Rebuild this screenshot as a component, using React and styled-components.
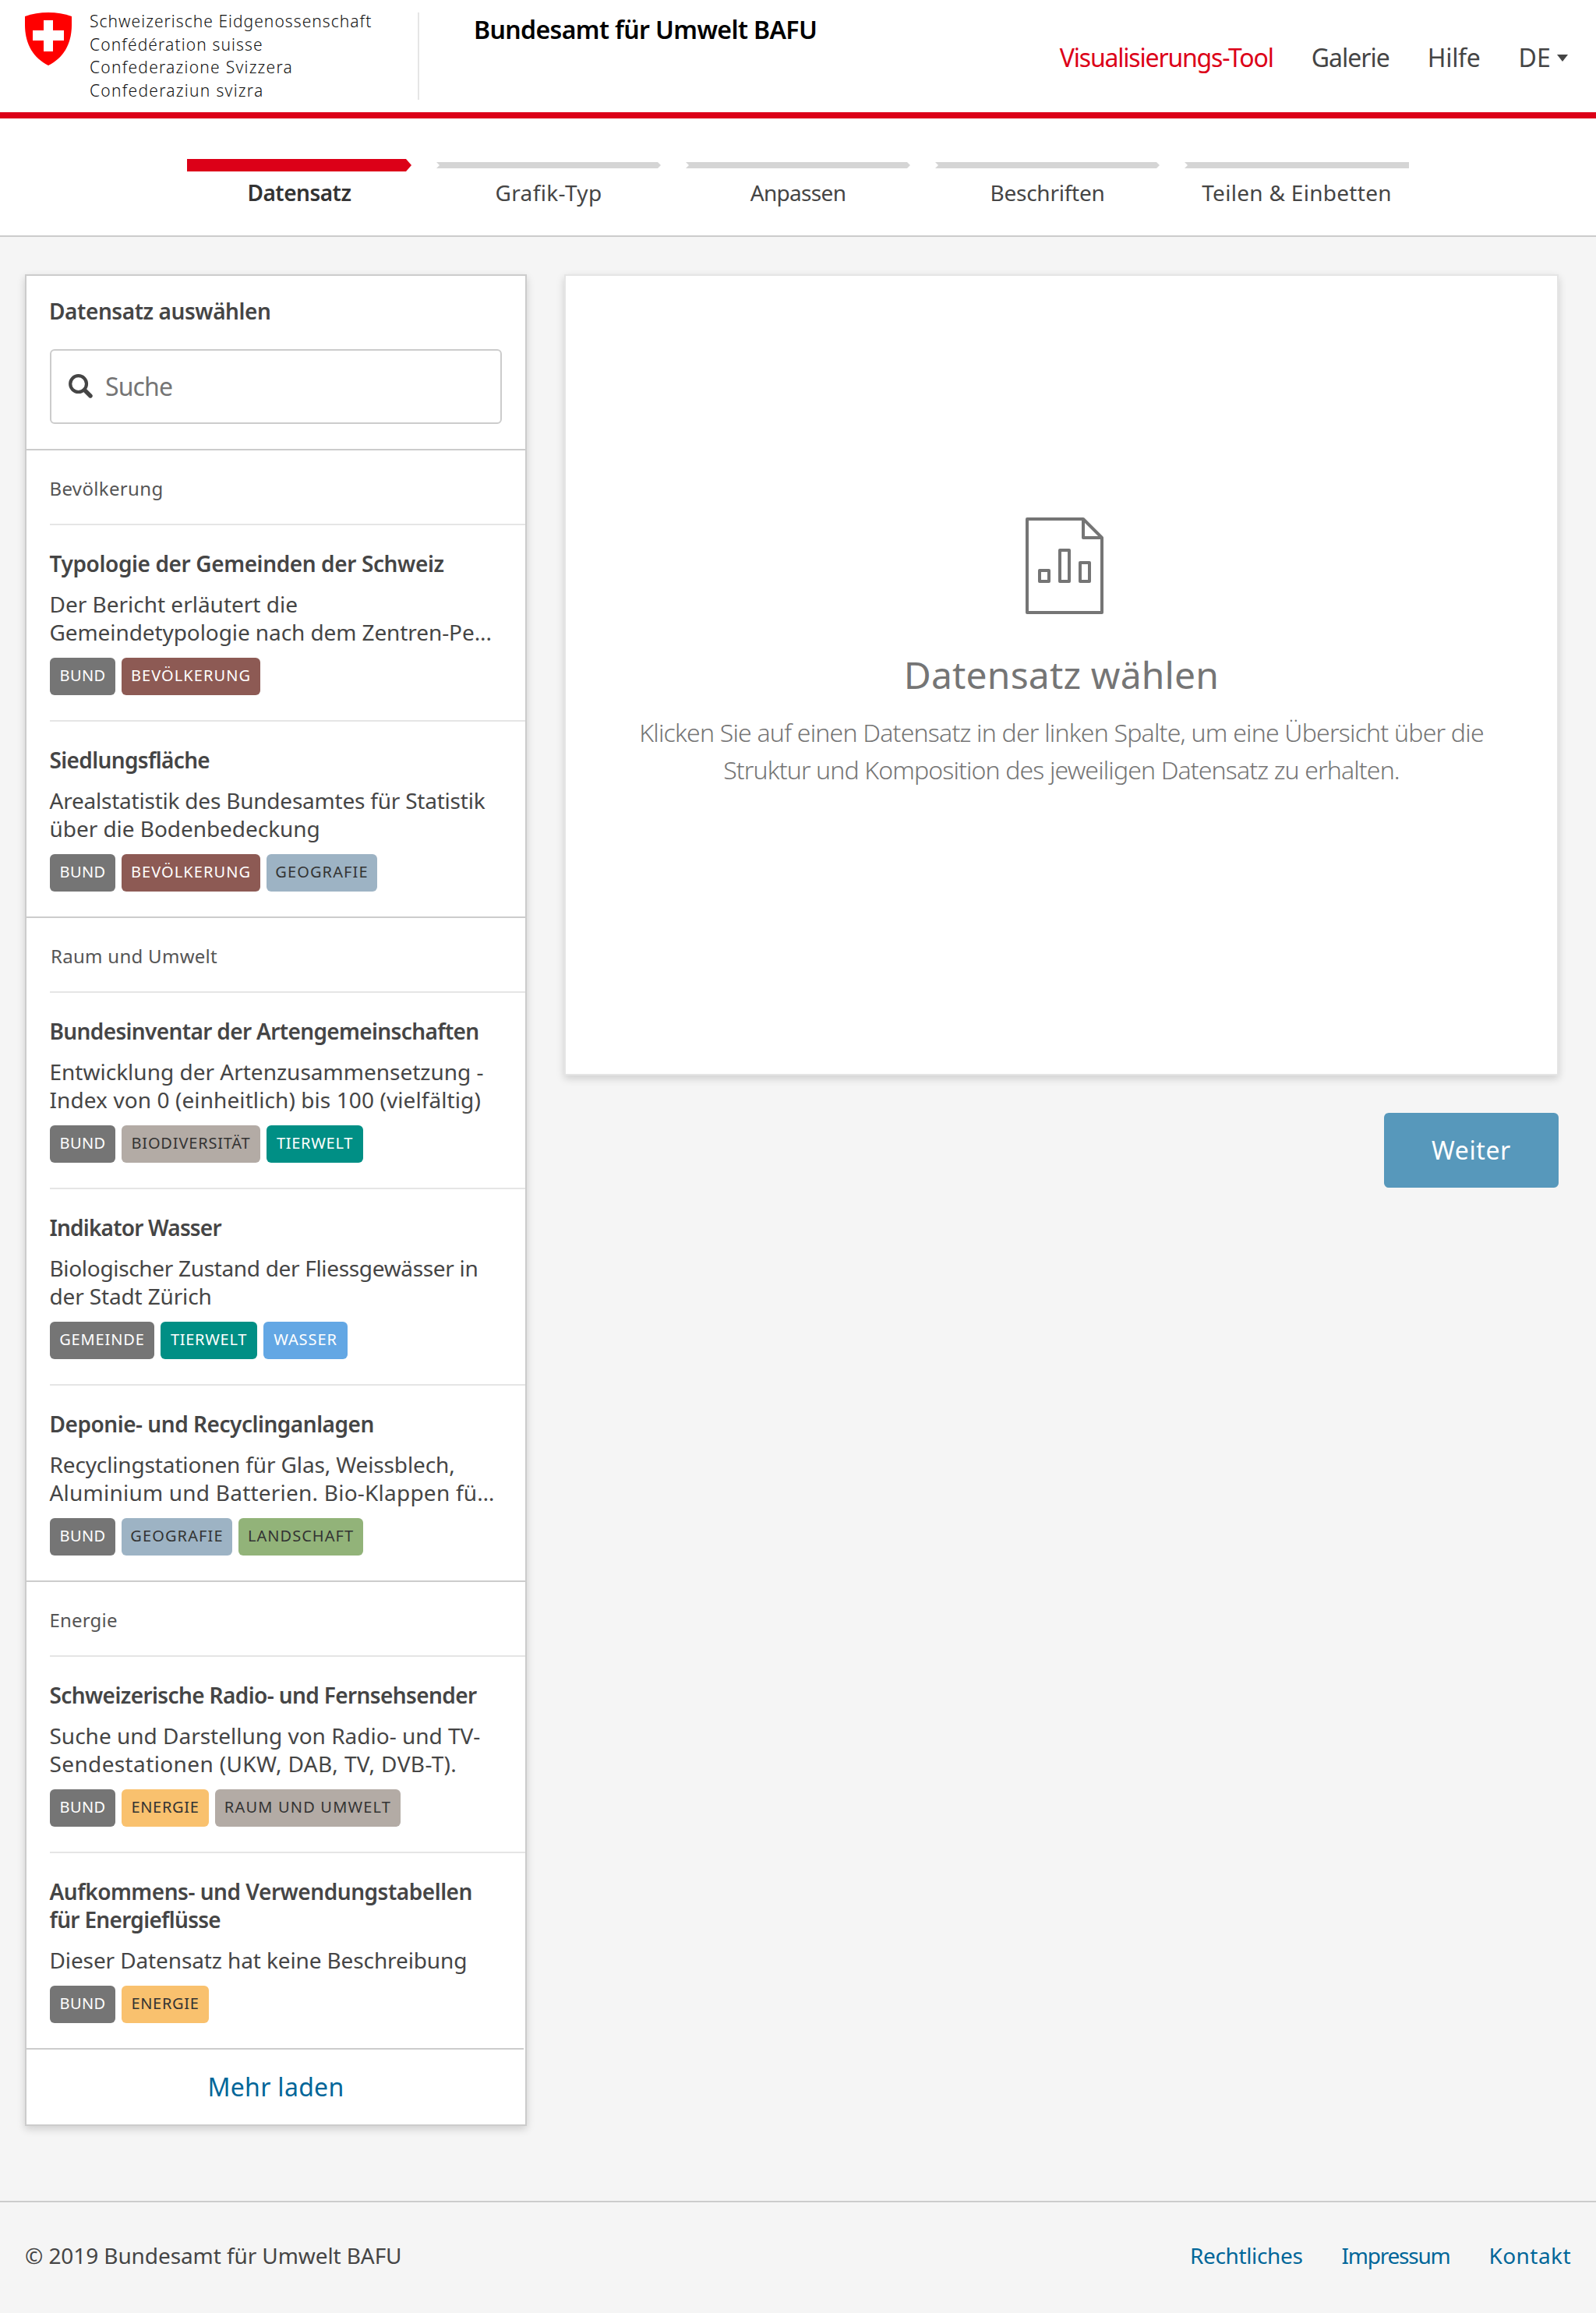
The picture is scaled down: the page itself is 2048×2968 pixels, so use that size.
import React from "react";
import styled, { createGlobalStyle } from "styled-components";

const Global = createGlobalStyle`
  *, *::before, *::after { box-sizing: border-box; }
  body { margin: 0; background: #f5f5f5; }
  ul, h1, h2, h3, p { margin: 0; padding: 0; font: inherit; list-style: none; }
`;

// Letter spacing per label, in pixels.
const TRACKING = {
  "Schweizerische Eidgenossenschaft": 1.04,
  "Confédération suisse": 1.12,
  "Confederazione Svizzera": 1.25,
  "Confederaziun svizra": 1.28,
  "Bundesamt für Umwelt BAFU": -0.62,
  "Visualisierungs-Tool": -1.2,
  "Galerie": -1,
  "Hilfe": -0.31,
  "DE": 0.14,
  "Datensatz": -0.51,
  "Grafik-Typ": 0.38,
  "Anpassen": -0.68,
  "Beschriften": -0.25,
  "Teilen & Einbetten": 0.29,
  "Datensatz auswählen": -0.43,
  "Suche": -0.87,
  "Bevölkerung": 0.35,
  "Raum und Umwelt": 0.28,
  "Energie": 0.18,
  "Typologie der Gemeinden der Schweiz": -0.39,
  "Siedlungsfläche": -0.64,
  "Bundesinventar der Artengemeinschaften": -0.64,
  "Indikator Wasser": -0.81,
  "Deponie- und Recyclinganlagen": -0.47,
  "Schweizerische Radio- und Fernsehsender": -0.61,
  "Aufkommens- und Verwendungstabellen": -0.47,
  "für Energieflüsse": -0.7,
  "Der Bericht erläutert die": -0.01,
  "Gemeindetypologie nach dem Zentren-Pe...": -0.09,
  "Arealstatistik des Bundesamtes für Statistik": -0.22,
  "über die Bodenbedeckung": -0.05,
  "Entwicklung der Artenzusammensetzung -": 0,
  "Index von 0 (einheitlich) bis 100 (vielfältig)": 0.09,
  "Biologischer Zustand der Fliessgewässer in": -0.33,
  "der Stadt Zürich": -0.15,
  "Recyclingstationen für Glas, Weissblech,": -0.14,
  "Aluminium und Batterien. Bio-Klappen fü…": 0.22,
  "Suche und Darstellung von Radio- und TV-": -0.01,
  "Sendestationen (UKW, DAB, TV, DVB-T).": 0.37,
  "Dieser Datensatz hat keine Beschreibung": -0.12,
  "BUND": 0.39,
  "BEVÖLKERUNG": 1.07,
  "RAUM UND UMWELT": 1.19,
  "GEMEINDE": 0.88,
  "GEOGRAFIE": 1.1,
  "BIODIVERSITÄT": 0.82,
  "TIERWELT": 0.72,
  "WASSER": 0.91,
  "LANDSCHAFT": 1.04,
  "ENERGIE": 0.7,
  "Mehr laden": 0.3,
  "© 2019 Bundesamt für Umwelt BAFU": -0.09,
  "Rechtliches": -0.35,
  "Impressum": -1.23,
  "Kontakt": 0.44,
  "Weiter": 0.6,
  "Datensatz wählen": 0.16,
  "Klicken Sie auf einen Datensatz in der linken Spalte, um eine Übersicht über die": -0.79,
  "Struktur und Komposition des jeweiligen Datensatz zu erhalten.": -0.87,
};

const Text = styled.span`
  letter-spacing: ${(p) => p.$tracking}px;
  white-space: nowrap;
`;
const Label = ({ children }) => <Text $tracking={TRACKING[children] || 0}>{children}</Text>;

const Page = styled.div`
  display: flex;
  flex-direction: column;
  width: 2048px;
  height: 2968px;
  background: #f5f5f5;
  color: #454545;
  font: 400 28px/36px "Noto Sans", "Open Sans", sans-serif;
`;

const Header = styled.header`
  display: flex;
  height: 152px;
  padding: 0 36px 0 32px;
  background: #fff;
  border-bottom: 8px solid #dc0018;
`;
const Brand = styled.div`
  display: flex;
  gap: 22px;
  width: 506px;
  height: 112px;
  margin-top: 16px;
  border-right: 2px solid #e5e5e5;
`;
const Confederation = styled.div`
  display: flex;
  flex-direction: column;
  margin-top: -3px;
  color: #111;
  font-weight: 300;
  font-size: 21px;
  line-height: 29.5px;
`;
const Office = styled.h1`
  margin: 17px 0 0 70px;
  color: #000;
  font-weight: 600;
  font-size: 32px;
  line-height: 42px;
`;
const Nav = styled.nav`
  display: flex;
  align-items: flex-start;
  gap: 49px;
  margin: 53px 0 0 auto;
  font-size: 32px;
  line-height: 42px;
`;
const NavItem = styled.a`
  display: flex;
  align-items: center;
  gap: 8px;
  color: ${(p) => (p.$active ? "#dc0018" : "#454545")};
`;
const Caret = styled.i`
  border: 8px solid transparent;
  border-width: 9px 7.5px 0;
  border-top-color: #454545;
`;

const Steps = styled.ol`
  display: grid;
  grid-template-columns: repeat(5, 288px);
  justify-content: center;
  gap: 32px;
  height: 152px;
  margin: 0;
  padding: 52px 0 0;
  background: #fff;
  border-bottom: 2px solid #ccc;
  list-style: none;
`;
const Step = styled.li`
  display: flex;
  flex-direction: column;
  align-items: center;
  gap: 9px;
  color: ${(p) => (p.$active ? "#333" : "#454545")};
  font-weight: ${(p) => (p.$active ? 600 : 400)};
`;
const bars = {
  first: "polygon(0 0, calc(100% - 7px) 0, 100% 50%, calc(100% - 7px) 100%, 0 100%)",
  middle: "polygon(0 0, calc(100% - 4px) 0, 100% 50%, calc(100% - 4px) 100%, 0 100%, 4px 50%)",
  last: "polygon(0 0, 100% 0, 100% 100%, 0 100%, 4px 50%)",
};
const StepBar = styled.div`
  width: 100%;
  height: ${(p) => (p.$active ? 16 : 8)}px;
  margin: ${(p) => (p.$active ? 0 : 4)}px 0;
  background: ${(p) => (p.$active ? "#dc0018" : "#d5d5d5")};
  clip-path: ${(p) => bars[p.$shape]};
`;

const Main = styled.main`
  display: grid;
  grid-template-columns: 644px 1276px;
  align-items: start;
  gap: 48px;
  height: 2520px;
  padding: 48px 48px 0 32px;
`;
const Panel = styled.section`
  background: #fff;
  border: 2px solid ${(p) => p.$edge};
  box-shadow: 0 4px 10px rgba(0, 0, 0, 0.16);
`;
const SearchArea = styled.div`
  display: flex;
  flex-direction: column;
  gap: 31px;
  height: 222px;
  padding: 27px 30px 0;
`;
const PanelTitle = styled.h2`
  margin-left: -1px;
  font-weight: 600;
`;
const SearchBox = styled.div`
  display: flex;
  align-items: center;
  gap: 15px;
  height: 96px;
  padding: 0 22px;
  border: 2px solid #ccc;
  border-radius: 6px;
  color: #757575;
  font-size: 32px;
  line-height: 42px;
`;
const Group = styled.section`
  border-top: 2px solid #ccc;
`;
const GroupTitle = styled.h3`
  height: 94px;
  padding: 33px 0 0 ${(p) => p.$indent}px;
  color: #555;
  font-size: 24px;
  line-height: 32px;
`;
const Item = styled.article`
  height: 252px;
  margin-left: 30px;
  padding-top: 31px;
  border-top: 2px solid #e5e5e5;
`;
const Lines = styled.div`
  display: flex;
  flex-direction: column;
  margin: 0 0 ${(p) => p.$gap}px -0.5px;
  font-weight: ${(p) => (p.$bold ? 600 : 400)};
`;
const Tags = styled.div`
  display: flex;
  gap: 8px;
`;
const tones = {
  gray: ["#757575", "#fff"],
  brown: ["#8d5a54", "#fff"],
  steel: ["#9db3c4", "#333"],
  taupe: ["#b3aba5", "#333"],
  teal: ["#008f85", "#fff"],
  blue: ["#63a7e4", "#fff"],
  green: ["#92b379", "#333"],
  amber: ["#f9c16e", "#333"],
};
const Tag = styled.span`
  display: flex;
  justify-content: center;
  width: ${(p) => p.$width}px;
  height: 48px;
  padding-top: 7px;
  border-radius: 6px;
  background: ${(p) => tones[p.$tone][0]};
  color: ${(p) => tones[p.$tone][1]};
  font-size: 20px;
  line-height: 32px;
`;
const More = styled.button`
  display: block;
  width: calc(100% - 2px);
  height: 98px;
  padding: 0 0 0 2px;
  background: none;
  border: 0;
  border-top: 2px solid #ccc;
  color: #069;
  font: inherit;
  font-size: 32px;
`;

const Content = styled.div`
  display: flex;
  flex-direction: column;
  align-items: flex-end;
  gap: 48px;
`;
const Preview = styled(Panel)`
  display: flex;
  flex-direction: column;
  align-items: center;
  width: 100%;
  height: 1028px;
  padding-top: 310px;
  color: #757575;
`;
const FileIcon = styled.svg`
  flex: none;
  margin-left: 8px;
`;
const PreviewTitle = styled.h2`
  margin: 48px 0 20px;
  font-size: 48px;
  line-height: 60px;
`;
const PreviewText = styled.p`
  display: flex;
  flex-direction: column;
  align-items: center;
  font-weight: 300;
  font-size: 32px;
  line-height: 48px;
`;
const Next = styled.button`
  width: 224px;
  height: 96px;
  padding: 0;
  background: #5798bb;
  border: 0;
  border-radius: 6px;
  color: #fff;
  font: inherit;
  font-size: 32px;
`;

const Footer = styled.footer`
  display: flex;
  justify-content: space-between;
  flex: 1;
  padding: 50px 32px 0;
  border-top: 2px solid #ccc;
`;
const FooterLinks = styled.nav`
  display: flex;
  gap: 50px;
  color: #069;
`;

const steps = ["Datensatz", "Grafik-Typ", "Anpassen", "Beschriften", "Teilen & Einbetten"];

const BUND = ["BUND", "gray", 84];
const BEVOELKERUNG = ["BEVÖLKERUNG", "brown", 178];
const GEOGRAFIE = ["GEOGRAFIE", "steel", 142];
const TIERWELT = ["TIERWELT", "teal", 124];
const ENERGIE = ["ENERGIE", "amber", 112];

const groups = [
  {
    name: "Bevölkerung",
    items: [
      {
        title: ["Typologie der Gemeinden der Schweiz"],
        text: ["Der Bericht erläutert die", "Gemeindetypologie nach dem Zentren-Pe..."],
        tags: [BUND, BEVOELKERUNG],
      },
      {
        title: ["Siedlungsfläche"],
        text: ["Arealstatistik des Bundesamtes für Statistik", "über die Bodenbedeckung"],
        tags: [BUND, BEVOELKERUNG, GEOGRAFIE],
      },
    ],
  },
  {
    name: "Raum und Umwelt",
    indent: 31,
    items: [
      {
        title: ["Bundesinventar der Artengemeinschaften"],
        text: ["Entwicklung der Artenzusammensetzung -", "Index von 0 (einheitlich) bis 100 (vielfältig)"],
        tags: [BUND, ["BIODIVERSITÄT", "taupe", 178], TIERWELT],
      },
      {
        title: ["Indikator Wasser"],
        text: ["Biologischer Zustand der Fliessgewässer in", "der Stadt Zürich"],
        tags: [["GEMEINDE", "gray", 134], TIERWELT, ["WASSER", "blue", 108]],
      },
      {
        title: ["Deponie- und Recyclinganlagen"],
        text: ["Recyclingstationen für Glas, Weissblech,", "Aluminium und Batterien. Bio-Klappen fü…"],
        tags: [BUND, GEOGRAFIE, ["LANDSCHAFT", "green", 160]],
      },
    ],
  },
  {
    name: "Energie",
    items: [
      {
        title: ["Schweizerische Radio- und Fernsehsender"],
        text: ["Suche und Darstellung von Radio- und TV-", "Sendestationen (UKW, DAB, TV, DVB-T)."],
        tags: [BUND, ENERGIE, ["RAUM UND UMWELT", "taupe", 238]],
      },
      {
        title: ["Aufkommens- und Verwendungstabellen", "für Energieflüsse"],
        text: ["Dieser Datensatz hat keine Beschreibung"],
        tags: [BUND, ENERGIE],
      },
    ],
  },
];

const Shield = () => (
  <svg width="61" height="68" viewBox="0 0 61 68">
    <path fill="#f00" d="M0 5Q14 0 30 0T60 5V16C60 42 48 59 30 68C12 59 0 42 0 16Z" />
    <path fill="#fff" d="M24 10H36V23H50V36H36V50H24V36H10V23H24Z" />
  </svg>
);
const SearchIcon = () => (
  <svg width="32" height="32" viewBox="0 0 32 32" fill="none" stroke="#454545">
    <circle cx="12.6" cy="12.6" r="10.4" strokeWidth="4.2" />
    <path d="M20.5 20.5L28 28" strokeWidth="5.4" strokeLinecap="round" />
  </svg>
);
const ChartFile = () => (
  <FileIcon width="100" height="124" viewBox="0 0 100 124" fill="none" stroke="#757575" strokeWidth="4" strokeLinejoin="round">
    <path d="M2 2H74L98 26V122H2Z" />
    <path d="M74 2V26H98" />
    <path d="M18 68H30V82H18ZM44 42H56V82H44ZM70 58H82V82H70Z" />
  </FileIcon>
);

export default function App() {
  return (
    <Page>
      <Global />
      <Header>
        <Brand>
          <Shield />
          <Confederation>
            <Label>Schweizerische Eidgenossenschaft</Label>
            <Label>Confédération suisse</Label>
            <Label>Confederazione Svizzera</Label>
            <Label>Confederaziun svizra</Label>
          </Confederation>
        </Brand>
        <Office><Label>Bundesamt für Umwelt BAFU</Label></Office>
        <Nav>
          <NavItem $active><Label>Visualisierungs-Tool</Label></NavItem>
          <NavItem><Label>Galerie</Label></NavItem>
          <NavItem><Label>Hilfe</Label></NavItem>
          <NavItem><Label>DE</Label><Caret /></NavItem>
        </Nav>
      </Header>
      <Steps>
        {steps.map((name, i) => (
          <Step key={name} $active={i === 0}>
            <StepBar $active={i === 0} $shape={i === 0 ? "first" : i === 4 ? "last" : "middle"} />
            <Label>{name}</Label>
          </Step>
        ))}
      </Steps>
      <Main>
        <Panel $edge="#ccc">
          <SearchArea>
            <PanelTitle><Label>Datensatz auswählen</Label></PanelTitle>
            <SearchBox><SearchIcon /><Label>Suche</Label></SearchBox>
          </SearchArea>
          {groups.map((group) => (
            <Group key={group.name}>
              <GroupTitle $indent={group.indent || 29.5}><Label>{group.name}</Label></GroupTitle>
              {group.items.map((item) => (
                <Item key={item.title[0]}>
                  <Lines $bold $gap={16}>{item.title.map((t) => <Label key={t}>{t}</Label>)}</Lines>
                  <Lines $gap={15}>{item.text.map((t) => <Label key={t}>{t}</Label>)}</Lines>
                  <Tags>
                    {item.tags.map(([name, tone, width]) => (
                      <Tag key={name} $tone={tone} $width={width}><Label>{name}</Label></Tag>
                    ))}
                  </Tags>
                </Item>
              ))}
            </Group>
          ))}
          <More><Label>Mehr laden</Label></More>
        </Panel>
        <Content>
          <Preview $edge="#e5e5e5">
            <ChartFile />
            <PreviewTitle><Label>Datensatz wählen</Label></PreviewTitle>
            <PreviewText>
              <Label>Klicken Sie auf einen Datensatz in der linken Spalte, um eine Übersicht über die</Label>
              <Label>Struktur und Komposition des jeweiligen Datensatz zu erhalten.</Label>
            </PreviewText>
          </Preview>
          <Next><Label>Weiter</Label></Next>
        </Content>
      </Main>
      <Footer>
        <Label>© 2019 Bundesamt für Umwelt BAFU</Label>
        <FooterLinks>
          <Label>Rechtliches</Label>
          <Label>Impressum</Label>
          <Label>Kontakt</Label>
        </FooterLinks>
      </Footer>
    </Page>
  );
}
